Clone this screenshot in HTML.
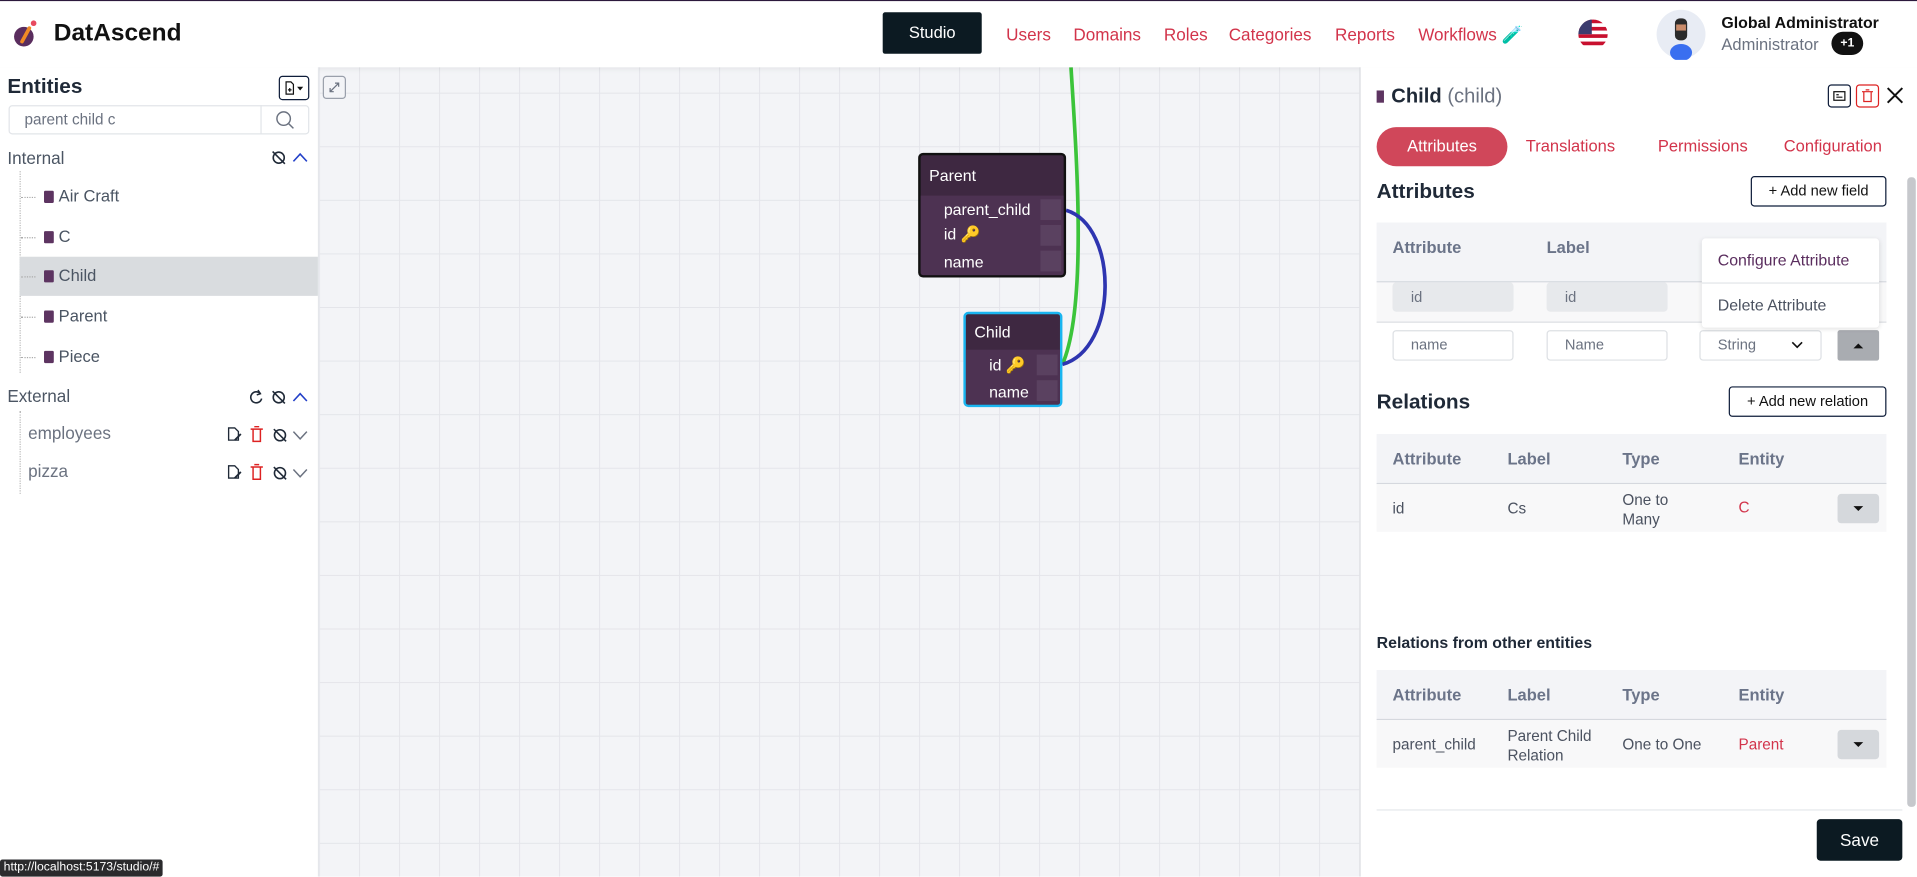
<!DOCTYPE html>
<html><head><meta charset="utf-8">
<style>
html,body{margin:0;padding:0;width:1917px;height:877px;overflow:hidden;background:#fff}
#w{position:absolute;left:0;top:0;width:1568px;height:717px;transform:scale(1.22258);transform-origin:0 0;font-family:"Liberation Sans",sans-serif;color:#1f2937}
.a{position:absolute}
.t{position:absolute;white-space:nowrap}
.red{color:#d2344b}
.th{font-size:13.5px;color:#6b7489;font-weight:bold}
.td{font-size:12.5px;color:#4b5260}
.inp{position:absolute;border:1px solid #dde0e4;border-radius:3px;background:#fff;font-size:12px;color:#6b7280;box-sizing:border-box;padding-left:14px;line-height:22px}
.dis{background:#e7e9ec;border-color:#e7e9ec}
.gbtn{position:absolute;width:34px;height:24px;background:#d5d8dc;border-radius:3px}
.gbtn:after{content:"";position:absolute;left:13px;top:10px;border-left:4px solid transparent;border-right:4px solid transparent;border-top:4px solid #111}
.obtn{position:absolute;border:1px solid #0f1d3a;border-radius:3px;font-size:12px;color:#111;text-align:center;box-sizing:border-box;background:#fff}
.sq{position:absolute;width:8px;height:10px;background:#5d3461;border-radius:1px}
.dot{position:absolute;border-top:1px dotted #aaa;width:12px}
.row{position:absolute;left:0;width:121px;font-size:13px;color:#fff}
.pad{position:absolute;right:2px;width:17px;background:#5a4160}
</style></head><body><div id="w">
<!-- top line -->
<div class="a" style="left:0;top:0;width:1568px;height:1px;background:#2d1a3e"></div>
<!-- canvas -->
<div class="a" style="left:261px;top:55px;width:851px;height:662px;background-color:#f3f4f7;background-image:linear-gradient(to right,#e4e5ea 1px,transparent 1px),linear-gradient(to bottom,#e4e5ea 1px,transparent 1px);background-size:32.72px 43.84px;background-position:0px 20.8px"></div>
<div class="a" style="left:264px;top:62px;width:19px;height:19px;border:1px solid #9aa0ab;border-radius:3px;background:#f3f4f7;box-sizing:border-box"></div>
<svg class="a" style="left:264px;top:62px" width="19" height="19"><path d="M6 13 L13 6 M10 6 H13 V9 M6 10 V13 H9" stroke="#6b7280" fill="none" stroke-width="1"/></svg>
<!-- edges -->
<svg class="a" style="left:0;top:0" width="1112" height="717">
<path d="M876 55 C880 120, 890 250, 869 298" stroke="#3bc43a" stroke-width="3" fill="none"/>
<path d="M872 172 C915 185, 915 285, 869 298" stroke="#2e35b0" stroke-width="3" fill="none"/>
</svg>
<!-- parent node -->
<div class="a" style="left:751px;top:125px;width:121px;height:102px;background:#3e2841;border:2px solid #111;border-radius:4px;box-sizing:border-box;overflow:hidden">
<div class="t" style="left:7px;top:9px;font-size:13px;color:#fff">Parent</div>
<div class="a" style="left:0;top:33px;width:121px;height:69px;background:#4d3252"></div>
<div class="pad" style="top:36px;height:17px"></div><div class="pad" style="top:57px;height:17px"></div><div class="pad" style="top:78px;height:17px"></div>
<div class="t" style="left:19px;top:37px;font-size:13px;color:#fff">parent_child</div>
<div class="t" style="left:19px;top:57px;font-size:13px;color:#fff">id <span style="color:#e0a82e">🔑</span></div>
<div class="t" style="left:19px;top:80px;font-size:13px;color:#fff">name</div>
</div>
<!-- child node -->
<div class="a" style="left:788px;top:255px;width:81px;height:78px;background:#3e2841;border:2px solid #1ab5f0;border-radius:4px;box-sizing:border-box;overflow:hidden">
<div class="t" style="left:7px;top:7px;font-size:13px;color:#fff">Child</div>
<div class="a" style="left:0;top:29px;width:81px;height:49px;background:#4d3252"></div>
<div class="pad" style="top:33px;height:17px"></div><div class="pad" style="top:54px;height:17px"></div>
<div class="t" style="left:19px;top:34px;font-size:13px;color:#fff">id <span style="color:#e0a82e">🔑</span></div>
<div class="t" style="left:19px;top:56px;font-size:13px;color:#fff">name</div>
</div>
<!-- header -->
<div class="a" style="left:0;top:1px;width:1568px;height:54px;background:#fff;box-shadow:0 2px 4px rgba(0,0,0,.06)"></div>
<svg class="a" style="left:8px;top:12px" width="30" height="30"><circle cx="11.5" cy="18" r="8" fill="#5a2d5e"/><path d="M10 22 L16 11" stroke="#f08a24" stroke-width="3" stroke-linecap="round"/><circle cx="19.5" cy="7" r="2.3" fill="#e84a5f"/></svg>
<div class="t" style="left:44px;top:16px;font-size:20px;font-weight:bold;color:#111">DatAscend</div>
<div class="a" style="left:722px;top:10px;width:81px;height:34px;background:#0c1a22;border-radius:2px;color:#fff;font-size:13.5px;text-align:center;line-height:34px">Studio</div>
<div class="t red" style="left:823px;top:20px;font-size:14px">Users</div>
<div class="t red" style="left:878px;top:20px;font-size:14px">Domains</div>
<div class="t red" style="left:952px;top:20px;font-size:14px">Roles</div>
<div class="t red" style="left:1005px;top:20px;font-size:14px">Categories</div>
<div class="t red" style="left:1092px;top:20px;font-size:14px">Reports</div>
<div class="t red" style="left:1160px;top:20px;font-size:14px">Workflows <span style="color:#3bb03b">🧪</span></div>
<svg class="a" style="left:1290px;top:15px" width="26" height="26"><defs><clipPath id="c"><circle cx="13" cy="13" r="12"/></clipPath></defs><g clip-path="url(#c)"><rect width="26" height="26" fill="#fff"/><rect y="1" width="26" height="3" fill="#c8102e"/><rect y="7" width="26" height="3" fill="#c8102e"/><rect y="13" width="26" height="3" fill="#c8102e"/><rect y="19" width="26" height="3" fill="#c8102e"/><rect width="12" height="13" fill="#3c3b6e"/></g></svg>
<svg class="a" style="left:1354px;top:7px" width="42" height="42"><circle cx="21" cy="21" r="20" fill="#e8ecf4"/><ellipse cx="21" cy="36" rx="9" ry="7" fill="#3a6ff0"/><rect x="16" y="8" width="10" height="18" rx="4" fill="#2b2b2b"/><rect x="17" y="13" width="8" height="5" fill="#c98b6a"/></svg>
<div class="t" style="left:1408px;top:11px;font-size:13px;font-weight:bold;color:#111">Global Administrator</div>
<div class="t" style="left:1408px;top:29px;font-size:13.5px;color:#6b7280">Administrator</div>
<div class="a" style="left:1498px;top:26px;width:26px;height:19px;border-radius:10px;background:#111;color:#fff;font-size:10px;font-weight:bold;text-align:center;line-height:19px">+1</div>
<!-- sidebar -->
<div class="a" style="left:0;top:55px;width:260px;height:662px;background:#fff;border-right:1px solid #e5e7eb"></div>
<div class="t" style="left:6px;top:61px;font-size:17px;font-weight:bold;color:#1f2937">Entities</div>
<div class="a" style="left:228px;top:62px;width:25px;height:20px;border:1px solid #0f1d3a;border-radius:3px;box-sizing:border-box"></div>
<svg class="a" style="left:228px;top:62px" width="25" height="20"><path d="M6 5 H10 L12 7 V15 H6 Z" stroke="#111" fill="none"/><path d="M9 10 V13 M7.5 11.5 H10.5" stroke="#111"/><path d="M15 9 H20 L17.5 12 Z" fill="#111"/></svg>
<div class="a" style="left:7px;top:86px;width:246px;height:24px;border:1px solid #e2e5e9;border-radius:3px;box-sizing:border-box"></div>
<div class="a" style="left:213px;top:86px;width:1px;height:24px;background:#e2e5e9"></div>
<div class="t" style="left:20px;top:91px;font-size:12.5px;color:#6b7280">parent child c</div>
<svg class="a" style="left:224px;top:89px" width="18" height="18"><circle cx="8" cy="8" r="5.5" stroke="#6b7280" fill="none" stroke-width="1.2"/><path d="M12 12 L16 16" stroke="#6b7280" stroke-width="1.2"/></svg>
<div class="t" style="left:6px;top:121px;font-size:14px;color:#4b5563">Internal</div>
<svg class="a" style="left:220px;top:121px" width="36" height="16"><circle cx="8" cy="8" r="4.5" stroke="#1f2937" fill="none" stroke-width="1.3"/><path d="M3 3 L13 13" stroke="#1f2937" stroke-width="1.3"/><path d="M20 11 L25.5 5 L31 11" stroke="#2340c8" fill="none" stroke-width="1.3"/></svg>
<div class="a" style="left:16px;top:140px;height:165px;border-left:1px dotted #bbb"></div>
<div class="a" style="left:16px;top:210px;width:244px;height:32px;background:#d9dcdf"></div>
<div class="dot" style="left:17px;top:161px"></div><div class="sq" style="left:36px;top:156px"></div><div class="t" style="left:48px;top:153px;font-size:13.5px;color:#4b5563">Air Craft</div>
<div class="dot" style="left:17px;top:194px"></div><div class="sq" style="left:36px;top:189px"></div><div class="t" style="left:48px;top:186px;font-size:13.5px;color:#4b5563">C</div>
<div class="dot" style="left:17px;top:226px"></div><div class="sq" style="left:36px;top:221px"></div><div class="t" style="left:48px;top:218px;font-size:13.5px;color:#4b5563">Child</div>
<div class="dot" style="left:17px;top:259px"></div><div class="sq" style="left:36px;top:254px"></div><div class="t" style="left:48px;top:251px;font-size:13.5px;color:#4b5563">Parent</div>
<div class="dot" style="left:17px;top:292px"></div><div class="sq" style="left:36px;top:287px"></div><div class="t" style="left:48px;top:284px;font-size:13.5px;color:#4b5563">Piece</div>
<div class="t" style="left:6px;top:316px;font-size:14px;color:#4b5563">External</div>
<svg class="a" style="left:200px;top:316px" width="56" height="16"><path d="M13 6 A4.5 4.5 0 1 0 14 10" stroke="#1f2937" fill="none" stroke-width="1.3"/><path d="M11 3 L13 6 L10 7" stroke="#1f2937" fill="none" stroke-width="1.2"/><circle cx="28" cy="9" r="4.5" stroke="#1f2937" fill="none" stroke-width="1.3"/><path d="M23 4 L33 14" stroke="#1f2937" stroke-width="1.3"/><path d="M40 12 L45.5 6 L51 12" stroke="#2340c8" fill="none" stroke-width="1.3"/></svg>
<div class="a" style="left:16px;top:336px;height:68px;border-left:1px dotted #bbb"></div>
<div class="t" style="left:23px;top:346px;font-size:14px;color:#6b7280">employees</div>
<div class="t" style="left:23px;top:377px;font-size:14px;color:#6b7280">pizza</div>
<svg class="a" style="left:184px;top:347px" width="72" height="16"><path d="M3 3 H8 L11 6 V13 H3 Z" stroke="#1f2937" fill="none" stroke-width="1.1"/><path d="M8 13 L13 8" stroke="#1f2937" stroke-width="1.5"/><path d="M21 4 H31 M23 4 V14 H29 V4 M24 2 H28" stroke="#d22" fill="none" stroke-width="1.2"/><circle cx="45" cy="9" r="4.5" stroke="#1f2937" fill="none" stroke-width="1.3"/><path d="M40 4 L50 14" stroke="#1f2937" stroke-width="1.3"/><path d="M56 6 L61.5 12 L67 6" stroke="#6b7280" fill="none" stroke-width="1.2"/></svg>
<svg class="a" style="left:184px;top:378px" width="72" height="16"><path d="M3 3 H8 L11 6 V13 H3 Z" stroke="#1f2937" fill="none" stroke-width="1.1"/><path d="M8 13 L13 8" stroke="#1f2937" stroke-width="1.5"/><path d="M21 4 H31 M23 4 V14 H29 V4 M24 2 H28" stroke="#d22" fill="none" stroke-width="1.2"/><circle cx="45" cy="9" r="4.5" stroke="#1f2937" fill="none" stroke-width="1.3"/><path d="M40 4 L50 14" stroke="#1f2937" stroke-width="1.3"/><path d="M56 6 L61.5 12 L67 6" stroke="#6b7280" fill="none" stroke-width="1.2"/></svg>
<div class="a" style="left:0;top:703px;width:133px;height:14px;background:#2a2a2c;border-radius:2px;color:#fff;font-size:10px;line-height:14px;padding-left:3px;box-sizing:border-box">http://localhost:5173/studio/#</div>
<!-- right panel -->
<div class="a" style="left:1112px;top:55px;width:456px;height:662px;background:#fff;border-left:1px solid #dfe1e5"></div>
<div class="a" style="left:1126px;top:74px;width:6px;height:10px;background:#5d3461"></div>
<div class="t" style="left:1138px;top:70px;font-size:16.5px;font-weight:bold;color:#1f2937">Child <span style="font-weight:normal;color:#6b7280">(child)</span></div>
<div class="a" style="left:1495px;top:69px;width:19px;height:19px;border:1px solid #0f1d3a;border-radius:3px;box-sizing:border-box"></div>
<svg class="a" style="left:1495px;top:69px" width="19" height="19"><rect x="5" y="6" width="9" height="7" stroke="#111" fill="none"/><path d="M7 8.5 H9 M7 10.5 H12" stroke="#111"/></svg>
<div class="a" style="left:1518px;top:69px;width:19px;height:19px;border:1px solid #d22;border-radius:3px;box-sizing:border-box"></div>
<svg class="a" style="left:1518px;top:69px" width="19" height="19"><path d="M5 6 H14 M6.5 6 V14 H12.5 V6 M8 4.5 H11" stroke="#d22" fill="none"/></svg>
<svg class="a" style="left:1542px;top:70px" width="16" height="16"><path d="M2 2 L14 14 M14 2 L2 14" stroke="#111" stroke-width="1.6"/></svg>
<div class="a" style="left:1126px;top:104px;width:107px;height:32px;background:#d0475a;border-radius:16px;color:#fff;font-size:13.5px;text-align:center;line-height:32px">Attributes</div>
<div class="t red" style="left:1248px;top:112px;font-size:13.5px">Translations</div>
<div class="t red" style="left:1356px;top:112px;font-size:13.5px">Permissions</div>
<div class="t red" style="left:1459px;top:112px;font-size:13.5px">Configuration</div>
<div class="a" style="left:1560px;top:145px;width:7px;height:515px;background:#c6c8cc;border-radius:3px"></div>
<div class="t" style="left:1126px;top:147px;font-size:17px;font-weight:bold">Attributes</div>
<div class="obtn" style="left:1432px;top:144px;width:111px;height:25px;line-height:23px">+ Add new field</div>
<div class="a" style="left:1126px;top:182px;width:417px;height:48px;background:#f3f4f7;border-bottom:1px solid #d5d8de"></div>
<div class="t th" style="left:1139px;top:195px">Attribute</div>
<div class="t th" style="left:1265px;top:195px">Label</div>
<div class="a" style="left:1126px;top:231px;width:417px;height:32px;background:#f8f8f9;border-bottom:1px solid #dcdfe3"></div>
<div class="inp dis" style="left:1139px;top:231px;width:99px;height:24px">id</div>
<div class="inp dis" style="left:1265px;top:231px;width:99px;height:24px">id</div>
<div class="inp" style="left:1139px;top:270px;width:99px;height:25px">name</div>
<div class="inp" style="left:1265px;top:270px;width:99px;height:25px">Name</div>
<div class="inp" style="left:1390px;top:270px;width:100px;height:25px">String</div>
<svg class="a" style="left:1464px;top:277px" width="12" height="10"><path d="M2 3 L6 7 L10 3" stroke="#111" fill="none" stroke-width="1.3"/></svg>
<div class="a" style="left:1503px;top:270px;width:34px;height:25px;background:#a9acb1;border-radius:2px"></div>
<div class="a" style="left:1516px;top:281px;border-left:4px solid transparent;border-right:4px solid transparent;border-bottom:4px solid #111"></div>
<div class="a" style="left:1392px;top:195px;width:145px;height:73px;background:#fff;box-shadow:0 1px 4px rgba(0,0,0,.12);border-radius:3px"></div>
<div class="a" style="left:1392px;top:231px;width:145px;height:1px;background:#e2e4e8"></div>
<div class="t" style="left:1405px;top:205px;font-size:13px;color:#5a2d5e">Configure Attribute</div>
<div class="t" style="left:1405px;top:242px;font-size:13px;color:#4b5260">Delete Attribute</div>
<div class="t" style="left:1126px;top:319px;font-size:17px;font-weight:bold">Relations</div>
<div class="obtn" style="left:1414px;top:316px;width:129px;height:25px;line-height:23px">+ Add new relation</div>
<div class="a" style="left:1126px;top:355px;width:417px;height:40px;background:#f3f4f7;border-bottom:1px solid #d5d8de"></div>
<div class="t th" style="left:1139px;top:368px">Attribute</div><div class="t th" style="left:1233px;top:368px">Label</div><div class="t th" style="left:1327px;top:368px">Type</div><div class="t th" style="left:1422px;top:368px">Entity</div>
<div class="a" style="left:1126px;top:396px;width:417px;height:39px;background:#f8f8f9"></div>
<div class="t td" style="left:1139px;top:409px">id</div><div class="t td" style="left:1233px;top:409px">Cs</div>
<div class="t td" style="left:1327px;top:401px;line-height:16px">One to<br>Many</div>
<div class="t red" style="left:1422px;top:408px;font-size:12.5px">C</div>
<div class="gbtn" style="left:1503px;top:404px"></div>
<div class="t" style="left:1126px;top:518px;font-size:13px;font-weight:bold;color:#1f2937">Relations from other entities</div>
<div class="a" style="left:1126px;top:548px;width:417px;height:40px;background:#f3f4f7;border-bottom:1px solid #d5d8de"></div>
<div class="t th" style="left:1139px;top:561px">Attribute</div><div class="t th" style="left:1233px;top:561px">Label</div><div class="t th" style="left:1327px;top:561px">Type</div><div class="t th" style="left:1422px;top:561px">Entity</div>
<div class="a" style="left:1126px;top:589px;width:417px;height:39px;background:#f8f8f9"></div>
<div class="t td" style="left:1139px;top:602px">parent_child</div>
<div class="t td" style="left:1233px;top:594px;line-height:16px">Parent Child<br>Relation</div>
<div class="t td" style="left:1327px;top:602px">One to One</div>
<div class="t red" style="left:1422px;top:602px;font-size:12.5px">Parent</div>
<div class="gbtn" style="left:1503px;top:597px"></div>
<div class="a" style="left:1126px;top:662px;width:430px;height:1px;background:#e5e7eb"></div>
<div class="a" style="left:1486px;top:670px;width:70px;height:34px;background:#0c1a22;border-radius:3px;color:#fff;font-size:14px;text-align:center;line-height:34px">Save</div>
</div></body></html>
